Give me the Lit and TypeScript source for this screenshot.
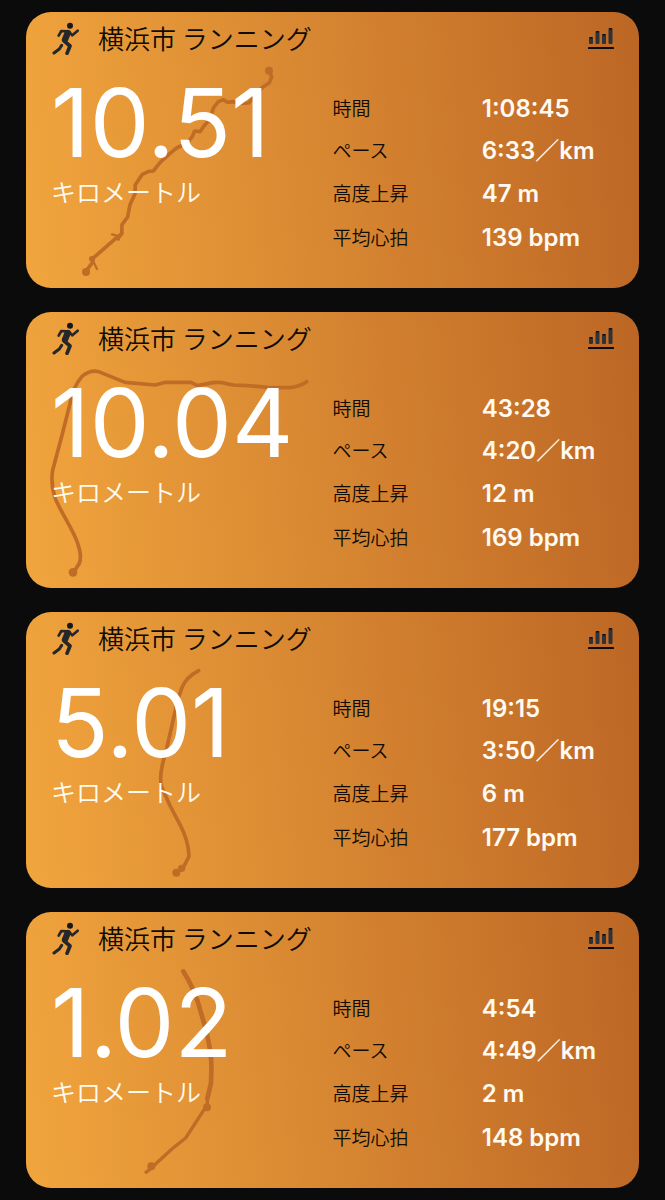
import { LitElement, html, css, svg } from "lit";
import { customElement, property } from "lit/decorators.js";

interface Dot {
  x: number;
  y: number;
  r: number;
}

interface Line {
  d: string;
  w: number;
}

interface Run {
  distance: string;
  time: string;
  pace: string;
  climb: string;
  heart: string;
  lines: Line[];
  dots: Dot[];
}

// Route outlines use three units per CSS pixel, from the card's top-left corner.
const runs: Run[] = [
  {
    distance: "10.51",
    time: "1:08:45",
    pace: "6:33／km",
    climb: "47 m",
    heart: "139 bpm",
    lines: [
      {
        d: "M731 178 L737 195 L730 212 L708 227 L690 250 L668 273 L640 274 L622 269 L604 271 L592 263 L577 269 L563 287 L550 324 L533 343 L522 359 L506 357 L499 374 L484 392 L452 408 L432 424 L402 452 L382 477 L368 478 L349 487 L328 518 L327 545 L312 578 L305 615 L288 638 L287 666 L272 677 L203 737 L198 753 L180 778",
        w: 11,
      },
      { d: "M258 667 L283 674 L290 662 M268 678 L278 683 L284 666 M197 739 L213 771 M194 740 L203 748", w: 7 },
    ],
    dots: [
      { x: 729, y: 176, r: 12 },
      { x: 180, y: 780, r: 12 },
      { x: 197, y: 740, r: 8 },
    ],
  },
  {
    distance: "10.04",
    time: "43:28",
    pace: "4:20／km",
    climb: "12 m",
    heart: "169 bpm",
    lines: [
      {
        d: "M143 781 L160 754 C166 738 163 716 155 694 C143 655 104 600 88 560 Q73 515 80 475 L108 370 L132 275 C137 244 150 214 168 193 Q192 173 218 179 L297 211 L388 219 L418 211 L495 211 L514 221 L560 212 Q585 209 600 215 L622 219 L665 221 L725 226 L790 227 Q820 224 842 209",
        w: 11,
      },
    ],
    dots: [{ x: 141, y: 781, r: 13 }],
  },
  {
    distance: "5.01",
    time: "19:15",
    pace: "3:50／km",
    climb: "6 m",
    heart: "177 bpm",
    lines: [
      {
        d: "M518 176 Q482 195 469 224 Q453 262 447 300 L423 405 L409 459 Q400 500 407 525 L431 579 L462 638 C480 672 488 702 489 733 L474 762 L451 783",
        w: 11,
      },
    ],
    dots: [
      { x: 451, y: 782, r: 12 },
      { x: 467, y: 769, r: 11 },
    ],
  },
  {
    distance: "1.02",
    time: "4:54",
    pace: "4:49／km",
    climb: "2 m",
    heart: "148 bpm",
    lines: [
      { d: "M472 178 Q500 224 515 268 L540 354 Q559 430 556 482 L555 513 L544 560", w: 14 },
      { d: "M544 560 L544 578 L479 678 L440 709 L375 769 L360 781", w: 10 },
    ],
    dots: [
      { x: 543, y: 586, r: 12 },
      { x: 376, y: 763, r: 12 },
    ],
  },
];

@customElement("run-card")
export class RunCard extends LitElement {
  @property({ attribute: false }) run!: Run;

  static styles = css`
    :host {
      display: block;
      position: relative;
      box-sizing: border-box;
      padding: 8px 0 28px;
      border-radius: 25px;
      background: linear-gradient(84deg, #f1a53d, #bc6625);
      color: #100b04;
    }
    .route {
      position: absolute;
      left: 0;
      top: 0;
      width: 320px;
      height: 276px;
      fill: #c06c27;
    }
    .route path {
      fill: none;
      stroke: #c06c27;
      stroke-linecap: round;
      stroke-linejoin: round;
    }
    .header {
      position: relative;
      display: flex;
      align-items: center;
      height: 36px;
      padding: 0 25px 0 26px;
    }
    .runner {
      width: 28px;
      height: 34px;
      margin-right: 18px;
    }
    .title {
      flex: 1;
      margin: 0;
      font-size: 26px;
      font-weight: 350;
      line-height: 36px;
    }
    .chart {
      width: 26px;
      height: 22px;
    }
    .body {
      position: relative;
      display: grid;
      grid-template-columns: 1fr 1fr;
      padding-top: 22px;
    }
    .summary {
      padding-left: 25px;
      color: #fff;
    }
    .distance {
      margin: 0;
      font-family: Inter, "Noto Sans CJK JP", sans-serif;
      font-size: 95px;
      line-height: 90px;
      height: 97px;
    }
    .unit {
      margin: 0;
      font-size: 25px;
      font-weight: 350;
      line-height: 32px;
      color: #fffbf0;
    }
    .stats {
      display: grid;
      grid-template-columns: 1fr 1fr;
      grid-template-rows: 42px 42px 44px 44px;
      align-items: center;
      margin: 0;
      padding: 10px 8px 0 0;
    }
    .label {
      padding-bottom: 2px;
      font-size: 19px;
      font-weight: 350;
      line-height: 28px;
    }
    .value {
      margin: 0;
      color: #fffaf2;
      font-family: Inter, "Noto Sans CJK JP", sans-serif;
      font-size: 24px;
      font-weight: 600;
      line-height: 28px;
    }
  `;

  render() {
    const { distance, time, pace, climb, heart, lines, dots } = this.run;
    const stats = [
      ["時間", time],
      ["ペース", pace],
      ["高度上昇", climb],
      ["平均心拍", heart],
    ];
    return html`
      <svg class="route" viewBox="0 0 960 828" aria-hidden="true">
        ${lines.map((l) => svg`<path d=${l.d} stroke-width=${l.w} />`)}
        ${dots.map((p) => svg`<circle cx=${p.x} cy=${p.y} r=${p.r} />`)}
      </svg>
      <header class="header">
        <svg class="runner" viewBox="0 0 84 102" aria-hidden="true">
          <g fill="none" stroke="#25272a" stroke-linecap="round" stroke-linejoin="round">
            <path d="M44 31 L28 30 L20 44" stroke-width="8" />
            <path d="M50 31 L61 43 L77 29" stroke-width="8" />
            <path d="M47 36 L39 56" stroke-width="19" />
            <path d="M38 61 L54 75 L45 97" stroke-width="11" />
            <path d="M29 73 L22 84 L6 96" stroke-width="9" />
          </g>
          <circle cx="54" cy="14" r="9" fill="#17181a" />
        </svg>
        <h2 class="title">横浜市 ランニング</h2>
        <svg class="chart" viewBox="0 0 26 22" aria-hidden="true">
          <g fill="#303236">
            <rect x="1" y="10" width="4" height="7" rx="1" />
            <rect x="7.5" y="4" width="4" height="13" rx="1" />
            <rect x="14" y="7" width="4" height="10" rx="1" />
            <rect x="20.5" y="1" width="4" height="16" rx="1" />
          </g>
          <g fill="#0c0c0c">
            <rect x="1.5" y="10" width="3" height="1.5" rx="0.7" />
            <rect x="8" y="4" width="3" height="1.5" rx="0.7" />
            <rect x="14.5" y="7" width="3" height="1.5" rx="0.7" />
            <rect x="21" y="1" width="3" height="1.5" rx="0.7" />
            <rect x="0" y="20" width="26" height="2" rx="0.5" />
          </g>
        </svg>
      </header>
      <div class="body">
        <div class="summary">
          <p class="distance">${distance}</p>
          <p class="unit">キロメートル</p>
        </div>
        <dl class="stats">
          ${stats.map(
            ([label, value]) => html`<dt class="label">${label}</dt>
              <dd class="value">${value}</dd>`
          )}
        </dl>
      </div>
    `;
  }
}

@customElement("app-root")
export class AppRoot extends LitElement {
  static styles = css`
    :host {
      display: block;
      box-sizing: border-box;
      min-height: 100vh;
      padding: 12px 26px;
      background: #0b0b0b;
      font-family: "Noto Sans CJK JP", sans-serif;
    }
    .list {
      display: grid;
      gap: 24px;
    }
  `;

  render() {
    return html`<main class="list" lang="ja">${runs.map((run) => html`<run-card .run=${run}></run-card>`)}</main>`;
  }
}
